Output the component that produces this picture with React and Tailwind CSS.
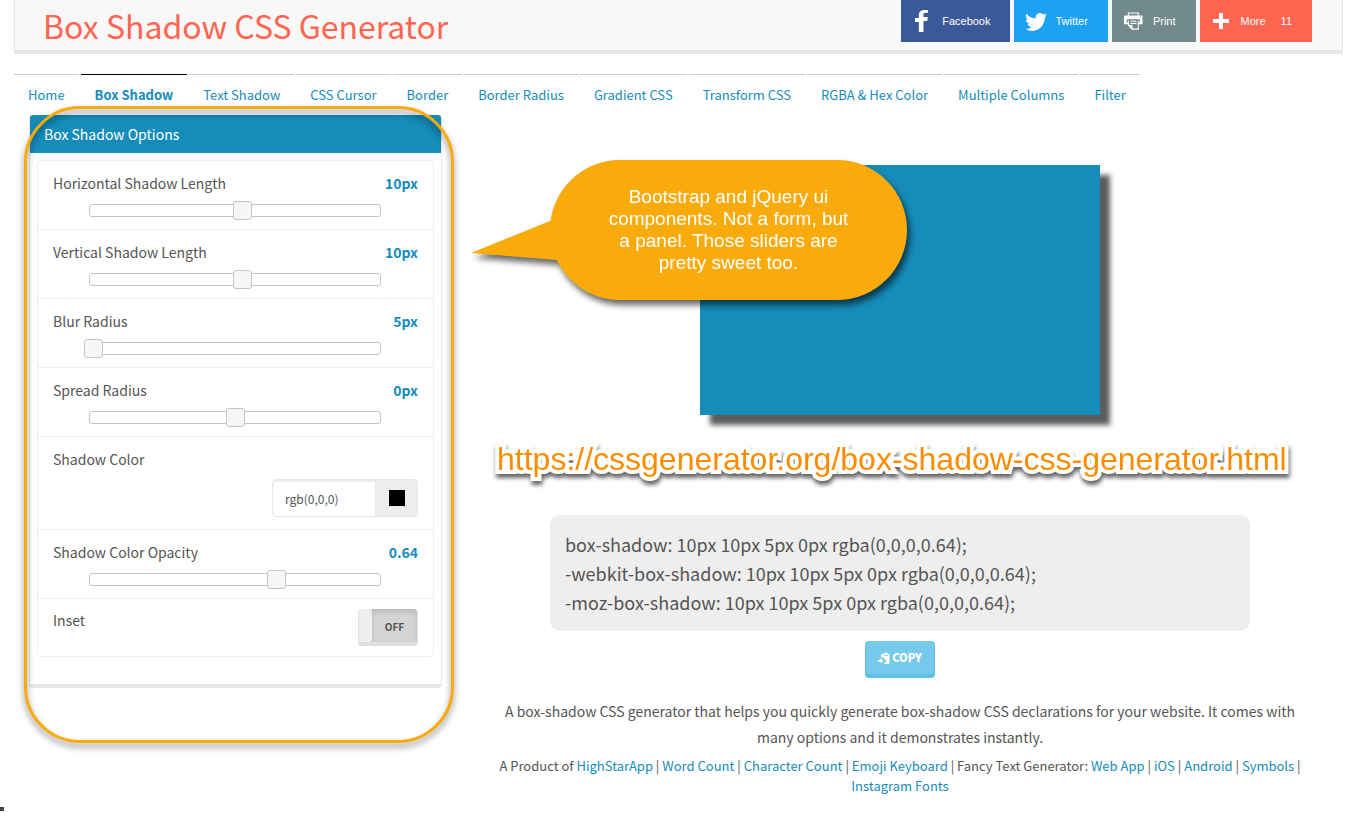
import React, { useState } from "react";

const TABS = [
  "Home",
  "Box Shadow",
  "Text Shadow",
  "CSS Cursor",
  "Border",
  "Border Radius",
  "Gradient CSS",
  "Transform CSS",
  "RGBA & Hex Color",
  "Multiple Columns",
  "Filter",
];

const SHARE_ICONS = {
  facebook:
    "M22 5.16c-.406-.054-1.806-.16-3.43-.16-3.4 0-5.733 1.825-5.733 5.17v2.882H9v3.913h3.837V27h4.604V15.965h3.823l.587-3.913h-4.41v-2.5c0-1.123.347-1.903 2.198-1.903H22V5.16z",
  twitter:
    "M27.996 10.116c-.81.36-1.68.602-2.592.71a4.526 4.526 0 0 0 1.984-2.496 9.037 9.037 0 0 1-2.866 1.095 4.513 4.513 0 0 0-7.69 4.116 12.81 12.81 0 0 1-9.3-4.715 4.49 4.49 0 0 0-.612 2.27 4.51 4.51 0 0 0 2.008 3.755 4.495 4.495 0 0 1-2.044-.564v.057a4.515 4.515 0 0 0 3.62 4.425 4.52 4.52 0 0 1-2.04.077 4.517 4.517 0 0 0 4.217 3.134 9.055 9.055 0 0 1-5.604 1.93A9.18 9.18 0 0 1 6 23.85a12.773 12.773 0 0 0 6.918 2.027c8.3 0 12.84-6.876 12.84-12.84 0-.195-.005-.39-.014-.583a9.172 9.172 0 0 0 2.252-2.336",
  print:
    "M24.67 10.62h-2.86V7.49H10.82v3.12H7.95c-.5 0-.9.4-.9.9v7.66h3.77v1.31L15 24.66h6.81v-5.44h3.77v-7.7c-.01-.5-.41-.9-.91-.9zM11.88 8.56h8.86v2.06h-8.86V8.56zm10.98 9.18h-1.05v-2.1h-1.06v7.96H16.4c-1.58 0-.82-3.74-.82-3.74s-3.65.89-3.69-.78v-3.43h-1.06v2.06H9.77v-3.58h13.09v3.61zm.75-4.91c-.4 0-.72-.32-.72-.72 0-.4.32-.72.72-.72.4 0 .72.32.72.72 0 .4-.32.72-.72.72zm-4.12 2.96h-6.1v1.06h6.1v-1.06zm-6.11 3.15h6.1v-1.06h-6.1v1.06z",
  more: "M18 14V8h-4v6H8v4h6v6h4v-6h6v-4h-6z",
};

function CopyIcon() {
  return (
    <svg viewBox="0 0 12 12" className="h-3 w-3" fill="#fff" aria-hidden="true">
      <path d="M3 3l1-1h1.300L6 .800h3.500L10.300 2H11.500v10H5.500L8.500 9 5 5.300 3 5.800z" />
      <path d="M5.600 2.500v1h4.300v-1" fill="none" stroke="#75caeb" strokeWidth=".7" />
      <path d="M0 7.800h2.500V6.300L5.500 8.800 2.500 11.300V9.800H0z" />
    </svg>
  );
}

function ShareButton({ color, icon, label, count }) {
  return (
    <button type="button" className={`flex h-[42px] items-center pr-5 pl-[5px] text-[11px] text-white ${color}`}>
      <svg viewBox="0 0 32 32" className="mr-1 h-8 w-8" fill="#fff" aria-hidden="true">
        <path d={SHARE_ICONS[icon]} />
      </svg>
      <span>{label}</span>
      {count && <span className="ml-[15px]">{count}</span>}
    </button>
  );
}

function SliderRow({ id, label, min, max, step, value, unit, onChange }) {
  return (
    <li className="border-b border-[#eeeeee] px-[15px] pt-[11px] pb-3">
      <div className="flex justify-between">
        <label htmlFor={id}>{label}</label>
        <output htmlFor={id} className="font-bold text-[#158cba]">
          {value}
          {unit}
        </output>
      </div>
      <div className="mt-[9px] mr-[37px] ml-9 flex h-[13px] items-center rounded-[3px] border border-[#c5c5c5]">
        <input
          id={id}
          type="range"
          min={min}
          max={max}
          step={step}
          value={value}
          onChange={(e) => onChange(Number(e.target.value))}
          className="-mr-2.5 -ml-[9px] h-[19px] min-w-0 flex-1 cursor-pointer appearance-none bg-transparent [&::-webkit-slider-thumb]:h-[19px] [&::-webkit-slider-thumb]:w-[19px] [&::-webkit-slider-thumb]:appearance-none [&::-webkit-slider-thumb]:rounded-[3px] [&::-webkit-slider-thumb]:border [&::-webkit-slider-thumb]:border-solid [&::-webkit-slider-thumb]:border-[#c5c5c5] [&::-webkit-slider-thumb]:bg-[#f6f6f6]"
        />
      </div>
    </li>
  );
}

function Link({ children }) {
  return (
    <a href="#" className="text-[#158cba]">
      {children}
    </a>
  );
}

export default function App() {
  const [x, setX] = useState(10);
  const [y, setY] = useState(10);
  const [blur, setBlur] = useState(5);
  const [spread, setSpread] = useState(0);
  const [opacity, setOpacity] = useState(0.64);
  const [color, setColor] = useState("rgb(0,0,0)");
  const [inset, setInset] = useState(false);

  const rgb = (color.match(/\d+/g) || [0, 0, 0]).slice(0, 3).join(",");
  const shadow = `${inset ? "inset " : ""}${x}px ${y}px ${blur}px ${spread}px rgba(${rgb},${opacity})`;

  return (
    <div className="relative min-h-screen pr-4 pl-[14px] font-['Noto_Sans_CJK_SC',sans-serif] text-[14px] leading-[23px] text-[#555555]">
      <header className="flex h-[54px] items-start justify-between border-x border-b-4 border-[#e7e7e7] bg-[#f8f8f8] pr-[30px] pl-7">
        <h1 className="text-[32px] leading-[50px] text-[#ff6550]">Box Shadow CSS Generator</h1>
        <div className="flex gap-1 font-['Liberation_Sans',sans-serif]">
          <ShareButton color="bg-[#3b5998]" icon="facebook" label="Facebook" />
          <ShareButton color="bg-[#1da1f2]" icon="twitter" label="Twitter" />
          <ShareButton color="bg-[#738a8d]" icon="print" label="Print" />
          <ShareButton color="bg-[#ff6550]" icon="more" label="More" count="11" />
        </div>
      </header>

      <nav className="mt-5 flex gap-0.5 text-[13px] leading-5">
        {TABS.map((tab) => (
          <a
            key={tab}
            href="#"
            className={`border-t px-[14px] py-2.5 text-[#158cba] ${
              tab === "Box Shadow" ? "border-black font-bold" : "border-[#cccccc]"
            }`}
          >
            {tab}
          </a>
        ))}
      </nav>

      <main className="flex">
        <section className="w-1/3 px-[15px]">
          <div className="relative rounded-[4px] border border-t-0 border-b-4 border-[#e7e7e7]">
            <h2 className="h-[38px] rounded-t-[3px] bg-[#158cba] px-[14px] leading-[39px] text-white">
              Box Shadow Options
            </h2>
            <ul className="mx-[7px] mt-[7px] mb-[27px] rounded-[4px] border border-[#eeeeee]">
              <SliderRow id="h" label="Horizontal Shadow Length" min={-200} max={200} value={x} unit="px" onChange={setX} />
              <SliderRow id="v" label="Vertical Shadow Length" min={-200} max={200} value={y} unit="px" onChange={setY} />
              <SliderRow id="blur" label="Blur Radius" min={0} max={500} value={blur} unit="px" onChange={setBlur} />
              <SliderRow id="spread" label="Spread Radius" min={-200} max={200} value={spread} unit="px" onChange={setSpread} />
              <li className="border-b border-[#eeeeee] px-[15px] pt-[11px] pb-3">
                <label htmlFor="color">Shadow Color</label>
                <div className="mt-2 ml-auto flex h-[38px] w-[146px] overflow-hidden rounded-[4px] border border-[#e7e7e7]">
                  <input
                    id="color"
                    type="text"
                    value={color}
                    onChange={(e) => setColor(e.target.value)}
                    className="min-w-0 flex-1 px-3 text-[12px] shadow-[inset_0_2px_0_#eeeeee] outline-none"
                  />
                  <button
                    type="button"
                    aria-label="Pick shadow color"
                    className="flex w-[42px] items-center justify-center border-l border-[#e7e7e7] bg-[#eeeeee]"
                  >
                    <span className="h-4 w-4" style={{ backgroundColor: `rgb(${rgb})` }} />
                  </button>
                </div>
              </li>
              <SliderRow id="opacity" label="Shadow Color Opacity" min={0} max={1} step={0.01} value={opacity} unit="" onChange={setOpacity} />
              <li className="flex items-start justify-between px-[15px] py-2.5">
                <span id="inset-label">Inset</span>
                <button
                  type="button"
                  role="switch"
                  aria-checked={inset}
                  aria-labelledby="inset-label"
                  onClick={() => setInset(!inset)}
                  className="flex h-[37px] w-[60px] overflow-hidden rounded-[4px] border border-t-0 border-b-4 border-[#e0e0e0] bg-[#d4d4d4] text-[10px] leading-[35px] font-bold"
                >
                  <span className="h-full w-[13px] rounded-r-[3px] bg-[#eeeeee]" />
                  <span className="h-full flex-1 shadow-[inset_0_3px_5px_rgba(0,0,0,0.125)]">{inset ? "ON" : "OFF"}</span>
                </button>
              </li>
            </ul>
            <div className="pointer-events-none absolute -top-[9px] -right-[13px] -bottom-[59px] -left-[6px] rounded-[56px] border-[3px] border-[#f9ab0b] drop-shadow-[0_4px_3px_rgba(0,0,0,0.5)]" />
          </div>
        </section>

        <section className="relative flex w-2/3 flex-col items-center px-[15px] pt-[50px]">
          <div className="h-[250px] w-[400px] max-w-full bg-[#158cba]" style={{ boxShadow: shadow }} />

          <div className="absolute top-[45px] left-[14px] flex h-[140px] w-[436px] pl-[79px] drop-shadow-[3px_5px_3px_rgba(0,0,0,0.6)]">
            <svg viewBox="0 0 100 50" className="absolute top-[56px] left-0 h-[50px] w-[100px]" aria-hidden="true">
              <path d="M0 37 90 .500 95 44.700Z" fill="#f9ab0b" />
            </svg>
            <p className="relative flex w-[357px] items-center justify-center rounded-full bg-[#f9ab0b] px-14 text-center font-['Liberation_Sans',sans-serif] text-[19px] leading-[22px] text-white">
              Bootstrap and jQuery ui components. Not a form, but a panel. Those sliders are pretty sweet too.
            </p>
          </div>

          <p className="absolute top-[324px] left-[40px] font-['Liberation_Sans',sans-serif] text-[32px] leading-[40px] whitespace-nowrap text-[#ff8c00] drop-shadow-[1px_4px_2px_rgba(0,0,0,0.6)] [-webkit-text-stroke:8px_#ffffff] [paint-order:stroke_fill] [stroke-linejoin:round]">
            https://cssgenerator.org/box-shadow-css-generator.html
          </p>

          <pre className="mt-[100px] w-[700px] max-w-full rounded-[10px] bg-[#eeeeee] px-[15px] pt-[15px] pb-[14px] font-['Noto_Sans_CJK_SC',sans-serif] text-[18px] leading-[29px]">
            {`box-shadow: ${shadow};\n-webkit-box-shadow: ${shadow};\n-moz-box-shadow: ${shadow};`}
          </pre>

          <button
            type="button"
            className="mt-2.5 flex h-[37px] items-center gap-0.5 rounded-[4px] border border-t-0 border-b-4 border-[#5fc1e8] bg-[#75caeb] px-3 text-[11px] font-black text-white"
          >
            <CopyIcon />
            COPY
          </button>

          <p className="mt-5 px-4 text-center leading-[26px]">
            A box-shadow CSS generator that helps you quickly generate box-shadow CSS declarations for your website. It
            comes with many options and it demonstrates instantly.
          </p>
          <p className="mt-1.5 text-center text-[13px] leading-5">
            A Product of <Link>HighStarApp</Link> | <Link>Word Count</Link> | <Link>Character Count</Link> |{" "}
            <Link>Emoji Keyboard</Link> | Fancy Text Generator: <Link>Web App</Link> | <Link>iOS</Link> |{" "}
            <Link>Android</Link> | <Link>Symbols</Link> | <Link>Instagram Fonts</Link>
          </p>
        </section>
      </main>

      <div className="absolute bottom-1.5 left-0 h-1 w-1 bg-[#444444]" />
    </div>
  );
}
